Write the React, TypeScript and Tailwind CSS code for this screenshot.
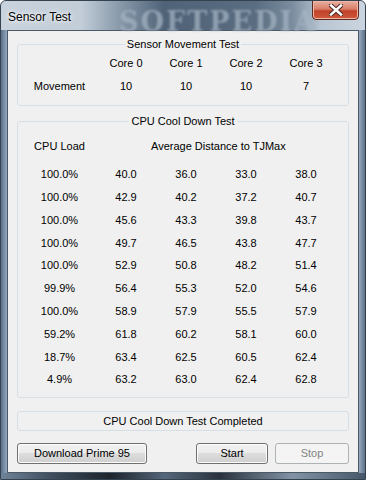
const loads = [
  ["100.0%", "40.0", "36.0", "33.0", "38.0"],
  ["100.0%", "42.9", "40.2", "37.2", "40.7"],
  ["100.0%", "45.6", "43.3", "39.8", "43.7"],
  ["100.0%", "49.7", "46.5", "43.8", "47.7"],
  ["100.0%", "52.9", "50.8", "48.2", "51.4"],
  ["99.9%", "56.4", "55.3", "52.0", "54.6"],
  ["100.0%", "58.9", "57.9", "55.5", "57.9"],
  ["59.2%", "61.8", "60.2", "58.1", "60.0"],
  ["18.7%", "63.4", "62.5", "60.5", "62.4"],
  ["4.9%", "63.2", "63.0", "62.4", "62.8"],
];

const cols = "grid grid-cols-[78px_60px_60px_60px_60px]";

function Btn({ label, w, disabled }: { label: string; w: string; disabled?: boolean }) {
  return (
    <div
      className={
        disabled
          ? `${w} h-[21px] rounded-[3px] border border-[#adb2b5] bg-[#f4f4f4] text-[#838383] flex items-center justify-center`
          : `${w} h-[21px] rounded-[3px] border border-[#707070] bg-[linear-gradient(180deg,#f2f2f2_0%,#ebebeb_49%,#dddddd_50%,#cfcfcf_100%)] shadow-[inset_0_0_0_1px_#fcfcfc] text-black flex items-center justify-center`
      }
    >
      {label}
    </div>
  );
}

export default function App() {
  return (
    <div className="w-[366px] h-[480px] flex flex-col rounded-t-[6px] border border-[#34414f] bg-[linear-gradient(90deg,#5b7088_0%,#8ea3b9_1.5%,#9fb3c7_2%,#8497ac_5%,#9aaabb_50%,#8a9db0_96%,#a4b6c8_98%,#5d7188_100%)] font-['Liberation_Sans',Arial,sans-serif] text-[11px] text-black overflow-hidden">
      {/* title bar */}
      <div className="relative h-[29px] shrink-0 bg-[linear-gradient(90deg,#c9d3dd_0%,#c2cdd8_22%,#8b9cad_32%,#4f6277_45%,#5a6d81_70%,#7a8c9e_80%,#b9c6d3_88%,#cbd5df_100%)]">
        <div className="absolute left-[118px] top-[1px] text-[27px] font-bold tracking-[2px] text-[#a7b6c5] opacity-70 blur-[1px] font-['DejaVu_Serif',serif]">
          SOFTPEDIA
        </div>
        <div className="absolute left-[7px] top-[7px] text-[12px] text-black [text-shadow:0_0_6px_#ffffff,0_0_3px_#ffffff]">
          Sensor Test
        </div>
        <div className="absolute left-[311px] top-[-1px] w-[47px] h-[20px] rounded-b-[4px] border border-[#5e2a22] bg-[linear-gradient(180deg,#e8b0a2_0%,#d97e68_45%,#c2412a_55%,#cf5a3c_100%)] shadow-[inset_0_0_0_1px_#efb7a8] flex items-center justify-center">
          <svg width="14" height="12" viewBox="0 0 14 12">
            <path d="M2 1.5 L12 10.5 M12 1.5 L2 10.5" stroke="#4a2a26" strokeWidth="4.5" strokeLinecap="square" />
            <path d="M2 1.5 L12 10.5 M12 1.5 L2 10.5" stroke="#ffffff" strokeWidth="2.5" strokeLinecap="square" />
          </svg>
        </div>
      </div>

      {/* client area */}
      <div className="mx-[6px] h-[443px] shrink-0 border border-[#4b5866] bg-[#f0f0f0] px-[9px] pt-[7px] flex flex-col">
        <fieldset className="border border-[#d5dfe5] rounded-[3px] pb-[7px]">
          <legend className="mx-auto px-[2px] leading-[13px]">Sensor Movement Test</legend>
          <div className={`${cols} pt-[1px]`}>
            <div className="h-[23px]" />
            {["Core 0", "Core 1", "Core 2", "Core 3"].map((c) => (
              <div key={c} className="h-[23px] flex items-center justify-center">{c}</div>
            ))}
            <div className="h-[23px] flex items-center justify-center pl-[5px]">Movement</div>
            {["10", "10", "10", "7"].map((v, i) => (
              <div key={i} className="h-[23px] flex items-center justify-center">{v}</div>
            ))}
          </div>
        </fieldset>

        <fieldset className="mt-[9px] border border-[#d5dfe5] rounded-[3px] pb-[6px]">
          <legend className="mx-auto px-[2px] leading-[13px]">CPU Cool Down Test</legend>
          <div className={`${cols} pt-[7px]`}>
            <div className="h-[23px] flex items-center justify-center pl-[5px]">CPU Load</div>
            <div className="col-span-4 h-[23px] flex items-center pl-[55px]">Average Distance to TJMax</div>
          </div>
          <div className={`${cols} mt-[5px]`}>
            {loads.map((r, i) =>
              r.map((v, j) => (
                <div
                  key={`${i}-${j}`}
                  className={`h-[22.8px] flex items-center justify-center ${j === 0 ? "pl-[5px]" : ""}`}
                >
                  {v}
                </div>
              ))
            )}
          </div>
        </fieldset>

        <div className="mt-[13px] h-[20px] rounded-[3px] border border-[#d5dfe5] flex items-center justify-center">
          CPU Cool Down Test Completed
        </div>

        <div className="mt-[12px] flex">
          <Btn label="Download Prime 95" w="w-[130px]" />
          <div className="ml-[49px]">
            <Btn label="Start" w="w-[72px]" />
          </div>
          <div className="ml-[7px]">
            <Btn label="Stop" w="w-[74px]" disabled />
          </div>
        </div>
      </div>

      {/* bottom frame */}
      <div className="flex-1 bg-[linear-gradient(90deg,#6f8398_0%,#3c4a59_15%,#1d242c_30%,#55677a_45%,#2a333d_60%,#8293a5_80%,#47576a_100%)]" />
    </div>
  );
}
